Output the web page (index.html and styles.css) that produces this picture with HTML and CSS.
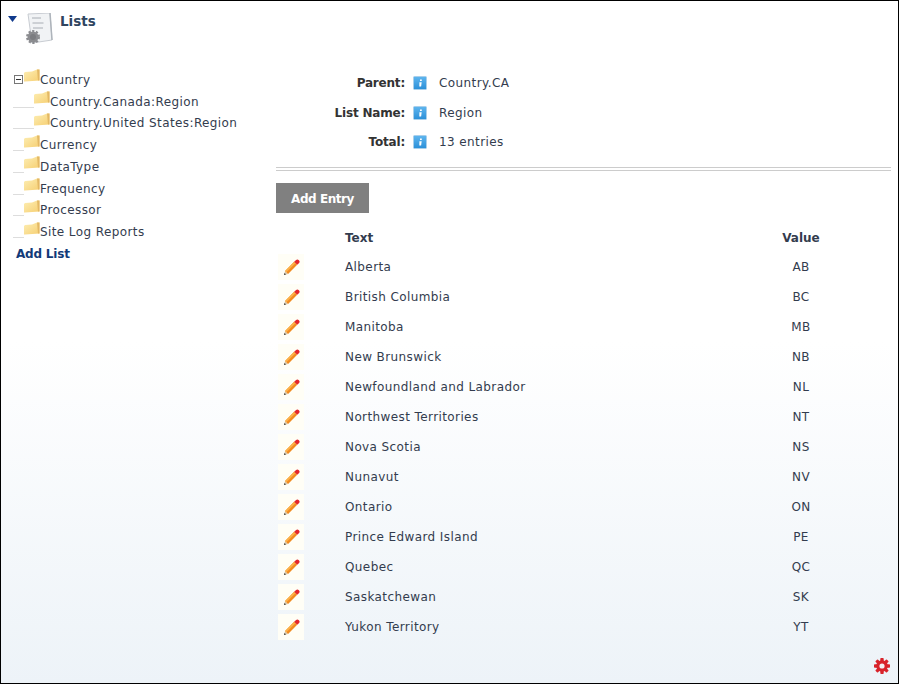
FILE: index.html
```html
<!DOCTYPE html>
<html lang="en">
<head>
<meta charset="utf-8">
<title>Lists</title>
<link rel="stylesheet" href="styles.css">
</head>
<body>
<svg class="defs" width="0" height="0" aria-hidden="true">
  <defs>
    <linearGradient id="fold" x1="0" y1="0" x2="1" y2="1"><stop offset="0" stop-color="#fdeeb4"/><stop offset="1" stop-color="#f6cf72"/></linearGradient>
    <linearGradient id="info" x1="0" y1="0" x2="0" y2="1"><stop offset="0" stop-color="#5fb6ef"/><stop offset="1" stop-color="#2a8fd8"/></linearGradient>
    <symbol id="folder" viewBox="0 0 16 15"><path d="M0 4 L1 3 L8 2.6 L13 0.5 L15.5 0.5 L15.5 11.5 L1 12.5 L0 12.5 Z" fill="url(#fold)"/><path d="M13 .5 L15.5 .5 L15.5 11.5 L14 11.6 Z" fill="#e3b864"/></symbol>
    <symbol id="infoicon" viewBox="0 0 14 14"><rect x=".5" y=".5" width="13" height="13" rx="1" fill="url(#info)" stroke="#a9cfea"/><rect x="7" y="3.500" width="1.800" height="1.500" fill="#fff"/><path d="M6.400 6.200h2.300l-.6 4.300h-1.800z" fill="#fff"/></symbol>
    <symbol id="pencil" viewBox="0 0 18 18"><path d="M1 17 L2.200 12.600 L5.400 15.800 Z" fill="#d8c8a8"/><path d="M1 17 L1.600 14.800 L3.200 16.400 Z" fill="#333"/><path d="M2.200 12.600 L11.800 3 L15 6.200 L5.400 15.800 Z" fill="#f28a1e"/><path d="M2.200 12.600 L11.800 3 L13.200 4.400 L3.600 14 Z" fill="#fbb14a"/><path d="M11.800 3 L13.600 1.200 A1.600 1.600 0 0 1 16.800 4.400 L15 6.200 Z" fill="#e3262c"/></symbol>
  </defs>
</svg>
<div class="window">
  <header class="title">
    <svg class="arrow" width="9" height="6" viewBox="0 0 9 6"><path d="M0 0h9L4.500 6z" fill="#103a8c"/></svg>
    <svg class="lists-icon" width="28" height="32" viewBox="0 0 28 32">
      <path d="M3 1 L25 0 L27 27 L7 30 Z" fill="#f1f3f5" stroke="#c8ccd2"/>
      <path d="M7 5h9M7.500 10h11M8 15h10" stroke="#a8adb4" stroke-width="1"/>
      <path d="M25 0 L27 27" stroke="#aeb4bb" stroke-width="1.500"/>
      <circle cx="8" cy="24" r="5.500" fill="#8b8c90" stroke="#8b8c90" stroke-width="3" stroke-dasharray="2 1.500"/>
      <circle cx="8" cy="24" r="3" fill="#7b7c80"/>
    </svg>
    <h1>Lists</h1>
  </header>
  <div class="columns">
    <nav class="tree">
      <div class="node"><span class="toggle"></span><svg class="folder"><use href="#folder"/></svg>Country</div>
      <div class="node"><span class="line wide"></span><svg class="folder"><use href="#folder"/></svg>Country.Canada:Region</div>
      <div class="node"><span class="line wide"></span><svg class="folder"><use href="#folder"/></svg>Country.United States:Region</div>
      <div class="node"><span class="line"></span><svg class="folder"><use href="#folder"/></svg>Currency</div>
      <div class="node"><span class="line"></span><svg class="folder"><use href="#folder"/></svg>DataType</div>
      <div class="node"><span class="line"></span><svg class="folder"><use href="#folder"/></svg>Frequency</div>
      <div class="node"><span class="line"></span><svg class="folder"><use href="#folder"/></svg>Processor</div>
      <div class="node"><span class="line"></span><svg class="folder"><use href="#folder"/></svg>Site Log Reports</div>
      <a class="add-list" href="#">Add List</a>
    </nav>
    <main class="content">
      <dl class="props">
        <div class="prop"><dt>Parent:</dt><dd><svg class="info"><use href="#infoicon"/></svg><span>Country.CA</span></dd></div>
        <div class="prop"><dt>List Name:</dt><dd><svg class="info"><use href="#infoicon"/></svg><span>Region</span></dd></div>
        <div class="prop"><dt>Total:</dt><dd><svg class="info"><use href="#infoicon"/></svg><span>13 entries</span></dd></div>
      </dl>
      <div class="rule"></div>
      <a class="button" href="#">Add Entry</a>
      <div class="entries">
        <div class="row head"><span></span><span>Text</span><span class="val">Value</span></div>
        <div class="row"><span class="edit"><svg><use href="#pencil"/></svg></span><span>Alberta</span><span class="val">AB</span></div>
        <div class="row"><span class="edit"><svg><use href="#pencil"/></svg></span><span>British Columbia</span><span class="val">BC</span></div>
        <div class="row"><span class="edit"><svg><use href="#pencil"/></svg></span><span>Manitoba</span><span class="val">MB</span></div>
        <div class="row"><span class="edit"><svg><use href="#pencil"/></svg></span><span>New Brunswick</span><span class="val">NB</span></div>
        <div class="row"><span class="edit"><svg><use href="#pencil"/></svg></span><span>Newfoundland and Labrador</span><span class="val">NL</span></div>
        <div class="row"><span class="edit"><svg><use href="#pencil"/></svg></span><span>Northwest Territories</span><span class="val">NT</span></div>
        <div class="row"><span class="edit"><svg><use href="#pencil"/></svg></span><span>Nova Scotia</span><span class="val">NS</span></div>
        <div class="row"><span class="edit"><svg><use href="#pencil"/></svg></span><span>Nunavut</span><span class="val">NV</span></div>
        <div class="row"><span class="edit"><svg><use href="#pencil"/></svg></span><span>Ontario</span><span class="val">ON</span></div>
        <div class="row"><span class="edit"><svg><use href="#pencil"/></svg></span><span>Prince Edward Island</span><span class="val">PE</span></div>
        <div class="row"><span class="edit"><svg><use href="#pencil"/></svg></span><span>Quebec</span><span class="val">QC</span></div>
        <div class="row"><span class="edit"><svg><use href="#pencil"/></svg></span><span>Saskatchewan</span><span class="val">SK</span></div>
        <div class="row"><span class="edit"><svg><use href="#pencil"/></svg></span><span>Yukon Territory</span><span class="val">YT</span></div>
      </div>
    </main>
  </div>
  <svg class="gear" width="16" height="16" viewBox="0 0 16 16">
    <g fill="#d8232a">
      <rect x="6.300" y="0" width="3.400" height="16" rx=".8"/>
      <rect x="6.300" y="0" width="3.400" height="16" rx=".8" transform="rotate(45 8 8)"/>
      <rect x="6.300" y="0" width="3.400" height="16" rx=".8" transform="rotate(90 8 8)"/>
      <rect x="6.300" y="0" width="3.400" height="16" rx=".8" transform="rotate(135 8 8)"/>
      <circle cx="8" cy="8" r="5.800"/>
    </g>
    <circle cx="8" cy="8" r="2.600" fill="#f4f0f2"/>
  </svg>
</div>
</body>
</html>
```

FILE: styles.css
```css
* { box-sizing: border-box; }
html, body { margin: 0; padding: 0; }
body { font-family: "DejaVu Sans", Verdana, sans-serif; font-size: 12px; letter-spacing: .4px; color: #333c4e; }
.defs { position: absolute; }
.window {
  position: relative;
  width: 899px;
  height: 684px;
  border: 1px solid #000;
  background: linear-gradient(to bottom, #fff 0, #fff 50%, #edf3f8 100%);
  overflow: hidden;
}
.title { display: flex; height: 67px; padding: 12px 0 0 7px; }
.arrow { margin-top: 3px; }
.lists-icon { margin-left: 8px; }
.title h1 { margin: 0 0 0 7px; font-size: 13.5px; line-height: 16px; font-weight: bold; letter-spacing: 0; color: #2f4560; }
.columns { display: flex; }
.tree { width: 275px; padding: 1px 0 0 12px; }
.node { display: flex; align-items: center; height: 21.75px; white-space: nowrap; }
.toggle { position: relative; width: 9px; height: 9px; margin: 0 1px; border: 1px solid #777; flex: none; }
.toggle::after { content: ""; position: absolute; left: 1px; right: 1px; top: 3px; height: 1px; background: #333; }
.line { width: 11px; height: 1px; background: #ddd; align-self: flex-end; margin-bottom: 5px; flex: none; }
.line.wide { width: 21px; }
.folder { width: 16px; height: 15px; flex: none; margin-bottom: 6px; }
.add-list { display: block; margin: 1px 0 0 3px; line-height: 21.75px; font-weight: bold; letter-spacing: -.2px; color: #123a78; text-decoration: none; }
.content { width: 615px; }
.props { margin: 0; }
.prop { display: flex; height: 29.8px; align-items: center; }
.prop dt { width: 129px; text-align: right; font-weight: bold; letter-spacing: -.2px; color: #333; }
.prop dd { margin: 0 0 0 8px; display: flex; align-items: center; }
.info { width: 14px; height: 14px; }
.prop dd span { margin-left: 12px; }
.rule { margin-top: 10px; height: 4px; border-top: 1px solid #ccc; border-bottom: 1px solid #ccc; }
.button {
  display: flex; align-items: center; justify-content: center;
  width: 93px; height: 30px; margin-top: 12px; padding-top: 1px;
  background: #808080; color: #fff; font-weight: bold; letter-spacing: -.45px; text-decoration: none;
}
.entries { margin-top: 11px; }
.row { display: grid; grid-template-columns: 69px 1fr 66px 57px; height: 30px; align-items: center; }
.row .val { grid-column: 3; text-align: center; }
.row.head { height: 28px; font-weight: bold; letter-spacing: 0; }
.edit { display: flex; align-items: center; justify-content: center; width: 26px; height: 26px; margin-left: 2px; background: #fffef6; }
.edit svg { width: 17px; height: 17px; }
.gear { position: absolute; right: 8px; bottom: 9px; }
```
